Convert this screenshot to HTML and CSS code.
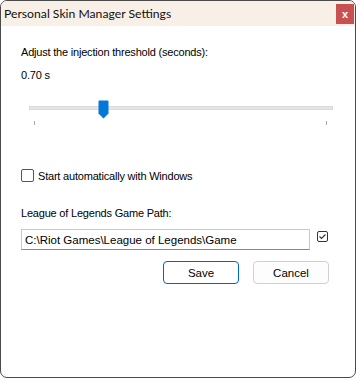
FILE: index.html
```html
<!DOCTYPE html>
<html>
<head>
<meta charset="utf-8">
<link rel="stylesheet" href="styles.css">
</head>
<body>
<div class="window">
  <div class="titlebar">
    <span class="title">Personal Skin Manager Settings</span>
    <span class="close">x</span>
  </div>
  <div class="content">
    <div class="label">Adjust the injection threshold (seconds):</div>
    <div class="value">0.70 s</div>
    <div class="slider">
      <div class="track"></div>
      <svg class="thumb" width="11" height="19" viewBox="0 0 11 19"><path d="M0.5 1.5 Q0.5 0.5 1.5 0.5 L9.5 0.5 Q10.5 0.5 10.5 1.5 L10.5 13.5 L5.5 18.5 L0.5 13.5 Z" fill="#0078d7"/></svg>
      <div class="ticks"><span class="tick"></span><span class="tick"></span></div>
    </div>
    <label class="check"><span class="box"></span><span>Start automatically with Windows</span></label>
    <div class="label path-label">League of Legends Game Path:</div>
    <div class="path-row">
      <div class="input">C:\Riot Games\League of Legends\Game</div>
      <svg class="mini" width="11" height="11" viewBox="0 0 11 11"><rect x="0.5" y="0.5" width="10" height="10" rx="1.5" fill="none" stroke="#333" stroke-width="1"/><path d="M2.5 5.5 L4.5 7.5 L8.5 3.5" fill="none" stroke="#333" stroke-width="1.1"/></svg>
    </div>
    <div class="buttons">
      <div class="btn primary">Save</div>
      <div class="btn">Cancel</div>
    </div>
  </div>
</div>
</body>
</html>
```
FILE: styles.css
```css
html, body { margin: 0; padding: 0; background: #fff; }
.window {
  width: 356px; height: 378px; box-sizing: border-box;
  border: 1px solid #4a4a4a; border-radius: 7px;
  overflow: hidden; background: #fff;
  font-family: "Liberation Sans", Arial, sans-serif; font-size: 11px; letter-spacing: -0.2px; color: #000;
}
.titlebar {
  height: 25px; background: #f8f0e7;
  display: flex; align-items: center; justify-content: space-between;
  padding: 0 1px 0 3px;
}
.title { font-family: "Lato", sans-serif; font-size: 12.2px; letter-spacing: 0; color: #111; }
.close {
  width: 18px; height: 20px; background: #c75050; color: #fff;
  display: flex; align-items: center; justify-content: center;
  font-family: "Liberation Sans", sans-serif; font-size: 11px; font-weight: bold; letter-spacing: 0;
  margin-top: 1px;
}
.content { padding: 19px 24px 0 20px; }
.label { line-height: 14px; }
.value { margin-top: 9px; line-height: 14px; }
.slider { position: relative; margin: 21px 0 0 8px; width: 304px; height: 24px; }
.track { position: absolute; left: 0; right: 0; top: 3px; height: 2px; background: #e6e6e6; border: 1px solid #dadada; }
.thumb { position: absolute; left: 69px; top: -3px; }
.ticks { position: absolute; left: 5px; right: 6px; top: 18px; display: flex; justify-content: space-between; }
.tick { width: 1px; height: 4px; background: #aaa; }
.check { display: flex; align-items: center; gap: 4px; margin-top: 42px; }
.box { width: 11px; height: 11px; border: 1px solid #555; border-radius: 2px; background: #fff; }
.path-label { margin-top: 24px; }
.path-row { display: flex; align-items: flex-start; gap: 7px; margin-top: 9px; }
.input {
  width: 289px; height: 21px; box-sizing: border-box; border: 1px solid #c8c8c8; border-bottom-color: #8a8a8a;
  padding: 3px 3px; line-height: 14px; white-space: nowrap; font-size: 11.5px; letter-spacing: 0;
}
.mini { margin-top: 2px; }
.buttons { display: flex; justify-content: flex-end; gap: 14px; margin-top: 11px; margin-right: 2px; }
.btn {
  width: 76px; height: 23px; box-sizing: border-box; border: 1px solid #d0d0d0; border-radius: 4px;
  background: #fdfdfd; display: flex; align-items: center; justify-content: center;
  font-size: 11.5px; letter-spacing: 0;
}
.btn.primary { border-color: #0067c0; background: #fff; }
```
